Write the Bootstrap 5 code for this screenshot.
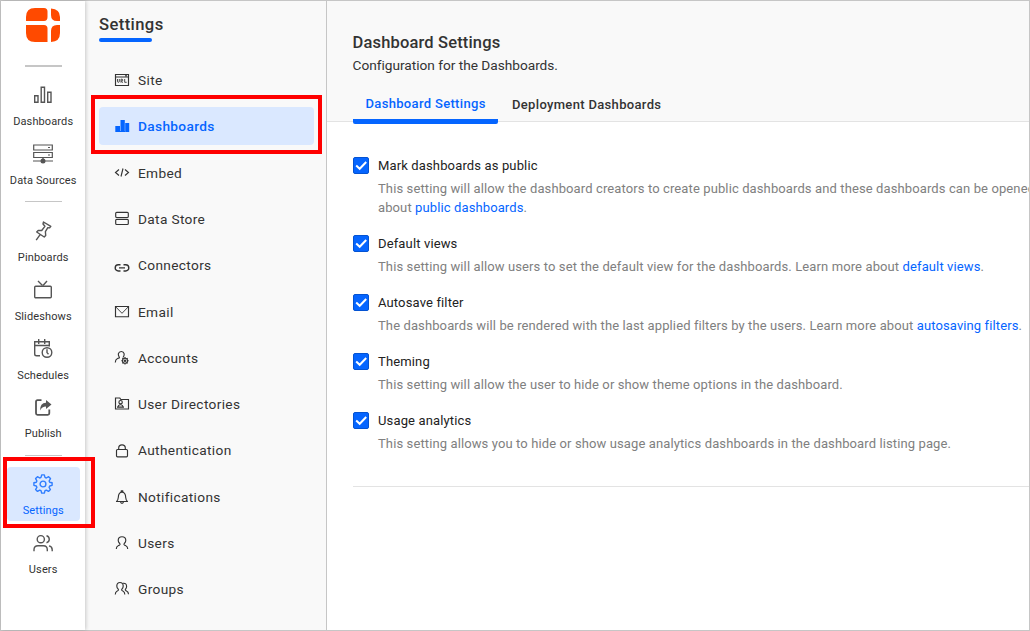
<!DOCTYPE html>
<html lang="en">
<head>
<meta charset="utf-8">
<meta name="viewport" content="width=device-width, initial-scale=1">
<title>Dashboard Settings</title>
<link rel="stylesheet" href="https://cdn.jsdelivr.net/npm/bootstrap@5.3.0/dist/css/bootstrap.min.css">
<style>
body{font-family:Roboto,"Liberation Sans",sans-serif;color:#333;height:631px;overflow:hidden;background:#fff}
a{color:#0565ff;text-decoration:none}
.frame{height:631px;border:1px solid #c6c6c6}
svg{display:block;fill:none;stroke:currentColor}
.rail{width:84px;background:#fff;box-shadow:1px 0 4px rgba(0,0,0,.2);z-index:2;padding-top:7px}
.logo{width:34px;height:34px;fill:#ff4a00;stroke:none;margin-bottom:23px}
.rule{width:37px;height:1px;background:#c6c6c6}
.rule-top{height:2px;margin-bottom:11px}
.rule-mid{margin:6px 0 12px}
.rule-low{margin:6px 0 11px}
.rail-item{width:73px;height:54px;padding:7px 0 0 .4px;font-size:11px;line-height:14px;letter-spacing:.12px;border-radius:4px;color:#333;margin-bottom:4.7px;white-space:nowrap}
.rail-item svg{width:20px;height:20px;margin-bottom:10px;color:#555;stroke-width:1.4}
.rail-item.active{background:#dae8ff;color:#0565ff}
.rail-item.active svg{color:#2f7dff}
.side{width:242px;background:#f9f9f9;border-right:1px solid #c6c6c6;padding:12px 12px 0 14px}
.side-title{font-size:16.6px;line-height:24px;font-weight:500;letter-spacing:.4px;margin:0}
.side-bar{width:53px;height:4px;border-radius:2px;background:#0565ff;margin:1px 0 19px}
.side .nav-link{height:38px;padding:0 0 0 15px;margin-bottom:8.27px;font-size:13.7px;letter-spacing:.34px;color:#333;border-radius:4px;gap:8px}
.side .nav-link svg{width:16px;height:16px;stroke-width:1.15}
.side .nav-link.active{background:#dae8ff;color:#0565ff;font-weight:500;margin-bottom:8.83px}
.content{background:#fff;overflow:hidden}
.head{height:121px;background:#f9f9f9;border-bottom:1px solid #e3e3e3;padding:31px 0 0 25.500px}
.head h1{font-size:16.500px;line-height:22px;font-weight:500;letter-spacing:.16px;margin:0}
.head p{font-size:13.700px;line-height:22px;letter-spacing:-.02px;margin:0 0 17px}
.tab-row{margin-left:.5px}
.tab{height:31px;padding:0 12px;font-size:13px;line-height:24px;font-weight:500;letter-spacing:.33px;color:#333;margin-right:2px}
.tab.active{height:31px;padding-left:12.5px;line-height:22px;color:#0565ff;border-bottom:5px solid #0565ff;border-radius:2px;width:145px}
.options{width:712px;padding:35px 0 33px;margin-left:26px;border-bottom:1px solid #e3e3e3}
.option{font-size:13px;letter-spacing:.113px;line-height:19px;margin-bottom:18px;gap:9px}
.option:last-child{margin-bottom:0}
.option label{line-height:18px;letter-spacing:.14px;margin-bottom:4px;color:#222}
.option p{color:#808080;margin:0;white-space:nowrap}
.tick{width:16px;height:17px;flex:none;background:#0565ff;border:1px solid #0453d2;border-radius:2px}
.tick svg{width:14px;height:15px;stroke:#fff;stroke-width:2}
.callout{position:absolute;border:4px solid #f00;z-index:5;pointer-events:none}
.callout-rail{left:-3.5px;top:-10px;width:92px;height:71px}
.callout-side{left:-8px;top:-12px;width:231px;height:59px}
</style>
</head>
<body>
<div class="frame d-flex">
  <nav class="rail d-flex flex-column align-items-center flex-shrink-0 position-relative">
    <svg class="logo" viewBox="0 0 34 34"><path d="M9 0H18Q21.500 0 21.500 3.500V9Q21.500 13 18 13H0V9Q0 0 9 0ZM25 .5Q34 1 34 9V13H31Q25 13 25 7ZM0 17H18Q21.500 17 21.500 20.500V34H9Q0 34 0 25ZM25 34V23Q25 17 31 17H34V25Q34 33.500 25 34Z"/></svg>
    <div class="rule rule-top"></div>
    <a class="rail-item d-flex flex-column align-items-center" href="#"><svg viewBox="0 0 20 20"><path d="M1.700 10.700h3.300v6.600H1.700zM8.200 2.200h3.300v15.100H8.200zM14.700 7.200H18v10.100h-3.300z"/></svg>Dashboards</a>
    <a class="rail-item d-flex flex-column align-items-center" href="#"><svg viewBox="0 0 20 20"><path stroke-width="1.200" d="M.7 1h18.600v5H.7zM.7 8.500h18.600v5H.7zM0 17h20M10 13.500v3M15 3.500h2M15 11h2"/><circle cx="10" cy="17" r="1.800" fill="currentColor"/></svg>Data Sources</a>
    <div class="rule rule-mid"></div>
    <a class="rail-item d-flex flex-column align-items-center" href="#"><svg viewBox="0 0 20 20"><path stroke-linejoin="round" d="m10.500 1 7.300 4.300-1.200 1.600-1.800-.3-2.400 4.100.3 3.800-1.500 1.500-7.500-5 1.500-1.500h3.500l3.200-4.200-1.900-2.300zM7.300 13.300 3.200 19.200"/></svg>Pinboards</a>
    <a class="rail-item d-flex flex-column align-items-center" href="#"><svg viewBox="0 0 20 20"><rect x="1.700" y="6.200" width="16.600" height="11.600" rx="1"/><path d="M5 1 9.500 5.500M14 1 10 5.500"/></svg>Slideshows</a>
    <a class="rail-item d-flex flex-column align-items-center" href="#"><svg viewBox="0 0 20 20"><path d="M7 16.800H3.500q-1.800 0-1.800-1.800V2.700h14.600V7.500M1.700 6.500h14.600M5.700 0V5M11.700 0V5"/><circle cx="14" cy="13.500" r="4.800"/><path d="M14 10.300v3.300l1.500 1.700"/></svg>Schedules</a>
    <a class="rail-item d-flex flex-column align-items-center" href="#"><svg viewBox="0 0 20 20"><path stroke-width="1.800" d="M8.500 3.200H4.500q-1.500 0-1.500 1.500v11.600q0 1.500 1.500 1.500h10.300q1.500 0 1.500-1.500V12.500"/><path fill="currentColor" stroke="none" d="M13 3 18.500 7.500 13 12V9.500Q9 9.500 7 13.500 7 6 13 5.700Z"/></svg>Publish</a>
    <div class="rule rule-low"></div>
    <a class="rail-item active position-relative d-flex flex-column align-items-center" href="#"><svg viewBox="0 0 20 20"><circle cx="10" cy="10" r="2.900"/><path stroke-linejoin="round" d="M8.700.9h2.600l.7 2.500 1.300.6 2.300-1.300 1.900 1.900L16.100 7l.6 1.200 2.400.6v2.500l-2.400.7-.6 1.300 1.300 2.200-1.900 1.900-2.200-1.300-1.300.6-.7 2.400H8.700L8 16.700l-1.300-.6-2.200 1.300-1.900-1.900 1.300-2.200-.6-1.300-2.400-.7V8.800l2.400-.6L3.900 7 2.600 4.600l1.900-1.900L6.700 4 8 3.400Z"/></svg>Settings<span class="callout callout-rail"></span></a>
    <a class="rail-item d-flex flex-column align-items-center" href="#"><svg viewBox="0 0 20 20"><circle cx="7.800" cy="6.200" r="3.600"/><path d="M1 18.300v-1.600q0-4 4-4h5.300q4 0 4 4v1.600M13.500 2.700a3.600 3.600 0 0 1 0 7M16 12.900q3.200.7 3.200 3.800v1.600"/></svg>Users</a>
  </nav>
  <aside class="side flex-shrink-0">
    <h2 class="side-title">Settings</h2>
    <div class="side-bar"></div>
    <nav class="nav flex-column">
      <a class="nav-link d-flex align-items-center" href="#"><svg viewBox="0 0 16 16"><path d="M1.500 2.500h13v11h-13zM1.500 5h13M11 3.700h2"/><path stroke-width=".9" d="M3.500 7v2.300q0 1 .9 1t.9-1V7M7 10.700V7.200h.8q1 0 1 .9t-1 .9h-.5l1.700 1.700M10.700 7v3.300h2"/></svg>Site</a>
      <a class="nav-link active position-relative d-flex align-items-center" href="#"><svg viewBox="0 0 16 16"><path fill="currentColor" stroke="none" d="M1.300 8H6v6H1.300zM6.500 2h4.300v12H6.500zM11.200 5h4v9h-4zM6 13h5v1H6z"/></svg>Dashboards<span class="callout callout-side"></span></a>
      <a class="nav-link d-flex align-items-center" href="#"><svg viewBox="0 0 16 16"><path d="M5 4.500 1.500 7.500 5 10.500M11 4.500l3.500 3L11 10.500M9 3.500 7 11.500"/></svg>Embed</a>
      <a class="nav-link d-flex align-items-center" href="#"><svg viewBox="0 0 16 16"><rect x="1.700" y="1.300" width="12.600" height="5.200" rx="1"/><rect x="1.700" y="8.300" width="12.600" height="5.200" rx="1"/></svg>Data Store</a>
      <a class="nav-link d-flex align-items-center" href="#"><svg viewBox="0 0 16 16"><path stroke-width="1.400" d="M6.500 6.800H4.300a3.100 3.100 0 0 0 0 6.200h2.200M9.500 6.800h2.200a3.100 3.100 0 0 1 0 6.200H9.500M5 9.900h6"/></svg>Connectors</a>
      <a class="nav-link d-flex align-items-center" href="#"><svg viewBox="0 0 16 16"><path d="M1.500 2.500h13v10.200h-13z"/><path stroke-width=".9" d="m1.700 2.800 6.300 6.500 6.300-6.500"/></svg>Email</a>
      <a class="nav-link d-flex align-items-center" href="#"><svg viewBox="0 0 16 16"><path d="M1.300 12.500q0-3 2.200-4l1.800-.6q.5-.6-.4-1.500-.8-1.300-.5-2.700Q5 1.500 7.300 1.500t2.800 2.200q.3 1.400-.4 2.600L9 7.500"/><circle cx="11" cy="10.700" r="2.500"/><circle cx="11" cy="10.700" r=".7"/><path d="M11 7v1.200M11 13.200v1.200M7.300 10.700h1.200M13.500 10.700h1.200M8.400 8.100l.9.900M12.700 12.400l.9.900M8.400 13.300l.9-.9M12.700 9l.9-.9"/></svg>Accounts</a>
      <a class="nav-link d-flex align-items-center" href="#"><svg viewBox="0 0 16 16"><path d="M1.500 13V2h4.300l1 1.500h7.700V13zM3 11.100h7M4 11q0-2 2-2.300h1q2 .3 2 2.300"/><circle cx="6.600" cy="6.200" r="1.700"/></svg>User Directories</a>
      <a class="nav-link d-flex align-items-center" href="#"><svg viewBox="0 0 16 16"><rect x="2.500" y="6.500" width="11" height="7.300" rx="1"/><path d="M4.700 6.500V5Q4.700 1.800 8 1.800T11.300 5v1.500"/></svg>Authentication</a>
      <a class="nav-link d-flex align-items-center" href="#"><svg viewBox="0 0 16 16"><path stroke-linejoin="round" d="M2.500 12.500Q4 11.500 4.300 8.500q.1-5.300 3.700-5.300t3.700 5.300q.3 3 1.800 4zM6.500 12.800q.2 1.600 1.500 1.600t1.500-1.600M7.200 3V1.700h1.600V3"/></svg>Notifications</a>
      <a class="nav-link d-flex align-items-center" href="#"><svg viewBox="0 0 16 16"><path d="M2.300 14q0-2.600 1.800-3.300l1.600-.8q.7-.5 0-1.400Q4.200 7 4.200 5.200q.1-3.500 3.800-3.500t3.800 3.500q0 1.800-1.500 3.300-.7.900 0 1.400l1.600.8q1.800.7 1.800 3.300"/></svg>Users</a>
      <a class="nav-link d-flex align-items-center" href="#"><svg viewBox="0 0 16 16"><path d="M1.300 13.500q0-2.600 1.600-3.300l1.300-.8q.6-.5 0-1.300Q2.800 6.700 2.800 4.900 3 1.500 6 1.500t3.200 3.400q0 1.800-1.300 3.200-.6.800 0 1.300l1.300.8q1.600.7 1.600 3.300M9 2.300q3.600-.4 3.600 3.100 0 1.500-1 2.600-.7.900.1 1.500l1.200.7q1.500.7 1.600 3"/></svg>Groups</a>
    </nav>
  </aside>
  <main class="content flex-grow-1">
    <header class="head">
      <h1>Dashboard Settings</h1>
      <p>Configuration for the Dashboards.</p>
      <div class="tab-row d-flex text-nowrap">
        <a class="tab active" href="#">Dashboard Settings</a>
        <a class="tab" href="#">Deployment Dashboards</a>
      </div>
    </header>
    <section class="options">
      <div class="option d-flex"><span class="tick"><svg viewBox="0 0 14 15"><path d="m2.200 7.500 3.500 3.300L12.200 4"/></svg></span><div><label class="d-block">Mark dashboards as public</label><p>This setting will allow the dashboard creators to create public dashboards and these dashboards can be opened<br>about <a href="#">public dashboards</a>.</p></div></div>
      <div class="option d-flex"><span class="tick"><svg viewBox="0 0 14 15"><path d="m2.200 7.500 3.500 3.300L12.200 4"/></svg></span><div><label class="d-block">Default views</label><p>This setting will allow users to set the default view for the dashboards. Learn more about <a href="#">default views</a>.</p></div></div>
      <div class="option d-flex"><span class="tick"><svg viewBox="0 0 14 15"><path d="m2.200 7.500 3.500 3.300L12.200 4"/></svg></span><div><label class="d-block">Autosave filter</label><p>The dashboards will be rendered with the last applied filters by the users. Learn more about <a href="#">autosaving filters</a>.</p></div></div>
      <div class="option d-flex"><span class="tick"><svg viewBox="0 0 14 15"><path d="m2.200 7.500 3.500 3.300L12.200 4"/></svg></span><div><label class="d-block">Theming</label><p>This setting will allow the user to hide or show theme options in the dashboard.</p></div></div>
      <div class="option d-flex"><span class="tick"><svg viewBox="0 0 14 15"><path d="m2.200 7.500 3.500 3.300L12.200 4"/></svg></span><div><label class="d-block">Usage analytics</label><p>This setting allows you to hide or show usage analytics dashboards in the dashboard listing page.</p></div></div>
    </section>
  </main>
</div>
<script src="https://cdn.jsdelivr.net/npm/bootstrap@5.3.0/dist/js/bootstrap.bundle.min.js"></script>
</body>
</html>
